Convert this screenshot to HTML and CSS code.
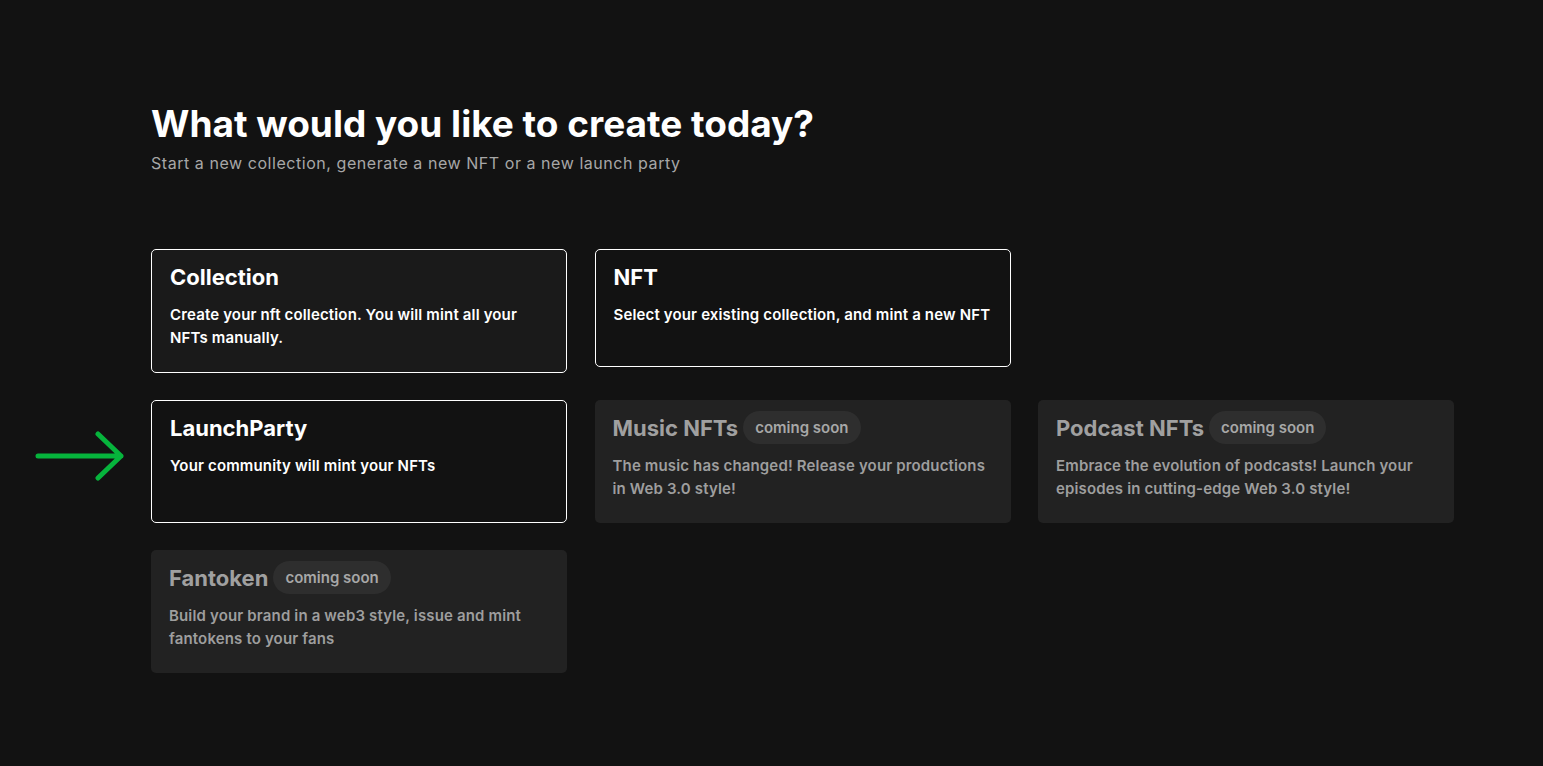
FILE: index.html
```html
<!DOCTYPE html>
<html lang="en">
<head>
<meta charset="utf-8">
<title>Create</title>
<link rel="stylesheet" href="styles.css">
</head>
<body>
<main class="page">
  <header class="intro">
    <h1 class="title">What would you like to create today?</h1>
    <p class="subtitle">Start a new collection, generate a new NFT or a new launch party</p>
  </header>
  <section class="grid">
    <div class="card card--active card--hover">
      <div class="card-head"><h2 class="card-title">Collection</h2></div>
      <p class="card-desc">Create your nft collection. You will mint all your NFTs manually.</p>
    </div>
    <div class="card card--active card--top">
      <div class="card-head"><h2 class="card-title">NFT</h2></div>
      <p class="card-desc">Select your existing collection, and mint a new NFT</p>
    </div>
    <div class="spacer"></div>
    <div class="card card--active card--pointed">
      <svg class="arrow" width="92" height="50" viewBox="0 0 92 50" aria-hidden="true">
        <path d="M3 25 H86 M63 3 L86 25 L63 47" fill="none" stroke="#06b43c" stroke-width="5" stroke-linecap="round" stroke-linejoin="round"/>
      </svg>
      <div class="card-head"><h2 class="card-title">LaunchParty</h2></div>
      <p class="card-desc">Your community will mint your NFTs</p>
    </div>
    <div class="card card--soon">
      <div class="card-head"><h2 class="card-title">Music NFTs</h2><span class="badge">coming soon</span></div>
      <p class="card-desc">The music has changed! Release your productions in Web 3.0 style!</p>
    </div>
    <div class="card card--soon">
      <div class="card-head"><h2 class="card-title">Podcast NFTs</h2><span class="badge">coming soon</span></div>
      <p class="card-desc">Embrace the evolution of podcasts! Launch your episodes in cutting-edge Web 3.0 style!</p>
    </div>
    <div class="card card--soon">
      <div class="card-head"><h2 class="card-title">Fantoken</h2><span class="badge">coming soon</span></div>
      <p class="card-desc">Build your brand in a web3 style, issue and mint fantokens to your fans</p>
    </div>
  </section>
</main>
</body>
</html>
```

FILE: styles.css
```css
html, body {
  margin: 0;
  padding: 0;
  background: #121212;
  height: 100%;
}
body {
  font-family: Inter, "Noto Sans", Arial, sans-serif;
  color: #fff;
}
.page {
  padding: 100px 0 0 151px;
}
.intro {
  margin-bottom: 74px;
}
.title {
  margin: 0;
  font-size: 37px;
  line-height: 48px;
  font-weight: 700;
}
.subtitle {
  margin: 3px 0 0 0;
  font-size: 16px;
  line-height: 24px;
  letter-spacing: 0.55px;
  color: #a7a7a7;
}
.grid {
  display: grid;
  grid-template-columns: repeat(3, 416px);
  column-gap: 27.5px;
  row-gap: 27px;
  align-items: stretch;
}
.card {
  position: relative;
  box-sizing: border-box;
  min-height: 118px;
  padding: 11px 18px 23px 18px;
  border-radius: 5px;
  background: #222222;
}
.card--active {
  background: #121212;
  border: 1px solid #ffffff;
  padding: 10px 18px 23px 18px;
}
.card--hover {
  background: #1a1a1a;
}
.card--top {
  align-self: start;
}
.card-head {
  display: flex;
  align-items: center;
  gap: 5px;
  height: 33px;
  margin-bottom: 10px;
}
.card-title {
  margin: 0;
  font-size: 22px;
  font-weight: 700;
  line-height: 28px;
}
.card--soon .card-title {
  color: #a0a0a0;
}
.card-desc {
  margin: 0;
  font-size: 15px;
  line-height: 23px;
  font-weight: 600;
  letter-spacing: 0.15px;
  color: #ffffff;
}
.card--soon .card-desc {
  color: #9e9e9e;
}
.badge {
  display: inline-flex;
  align-items: center;
  height: 33px;
  padding: 0 12px;
  border-radius: 17px;
  background: #2e2e2e;
  color: #a7a7a7;
  font-size: 15px;
  font-weight: 600;
}
.arrow {
  position: absolute;
  left: -117px;
  top: 30px;
}
```
